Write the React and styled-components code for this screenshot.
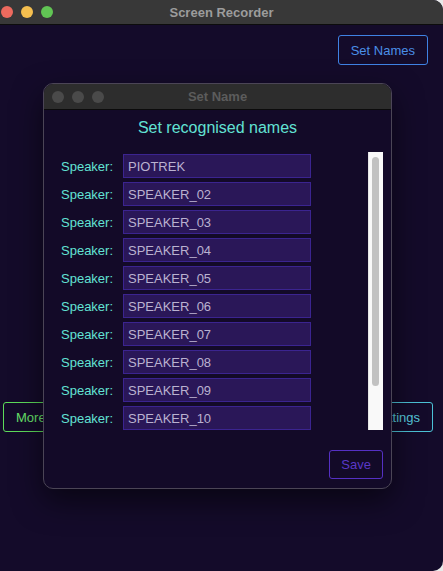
import styled, { createGlobalStyle } from "styled-components";

const speakers = [
  "PIOTREK",
  "SPEAKER_02",
  "SPEAKER_03",
  "SPEAKER_04",
  "SPEAKER_05",
  "SPEAKER_06",
  "SPEAKER_07",
  "SPEAKER_08",
  "SPEAKER_09",
  "SPEAKER_10",
  "SPEAKER_11",
];

const App = () => {
  return (
    <>
      <GlobalStyle />
      <Window>
        <TitleBar>
          <Lights>
            <Light color="#ed6a5e" />
            <Light color="#f5bf4f" />
            <Light color="#61c554" />
          </Lights>
          <TitleText>Screen Recorder</TitleText>
        </TitleBar>

        <Content>
          <TopRow>
            <OutlineButton color="#3f82e4" text="#4b8fe8">Set Names</OutlineButton>
          </TopRow>
          <ActionRow>
            <OutlineButton color="#5ddc5a" text="#68e36a" $wide>More</OutlineButton>
            <OutlineButton color="#4cc2d6" text="#57c9dc">Settings</OutlineButton>
          </ActionRow>
        </Content>

        <Dialog>
          <DialogTitleBar>
            <Lights $small>
              <Light color="#4a4a4a" />
              <Light color="#4a4a4a" />
              <Light color="#4a4a4a" />
            </Lights>
            <DialogTitle>Set Name</DialogTitle>
          </DialogTitleBar>

          <DialogBody>
            <Heading>Set recognised names</Heading>
            <ListArea>
              <SpeakerList>
                {speakers.map((name) => (
                  <SpeakerRow key={name}>
                    <SpeakerLabel>Speaker:</SpeakerLabel>
                    <NameInput defaultValue={name} />
                  </SpeakerRow>
                ))}
              </SpeakerList>
              <ScrollTrack>
                <ScrollThumb />
              </ScrollTrack>
            </ListArea>
            <Footer>
              <OutlineButton color="#5530c4" text="#5a38c6" $narrow>Save</OutlineButton>
            </Footer>
          </DialogBody>
        </Dialog>
      </Window>
    </>
  );
};

const GlobalStyle = createGlobalStyle`
  html, body {
    margin: 0;
    padding: 0;
    background: #e9e9e9;
  }
  body {
    font-family: "Liberation Sans", Arial, sans-serif;
  }
`;

const Window = styled.div`
  position: relative;
  width: 443px;
  height: 571px;
  display: flex;
  flex-direction: column;
  background: #140b2a;
  border-radius: 0 10px 10px 0;
  overflow: hidden;
`;

const TitleBar = styled.div`
  position: relative;
  height: 24px;
  flex-shrink: 0;
  display: flex;
  align-items: center;
  justify-content: center;
  background: #383838;
  border-bottom: 1px solid #0c0c0c;
`;

const Lights = styled.div`
  position: absolute;
  left: ${(p) => (p.$small ? "8px" : "1px")};
  top: 0;
  bottom: 0;
  display: flex;
  align-items: center;
  gap: 8px;
`;

const Light = styled.span`
  width: 12px;
  height: 12px;
  border-radius: 50%;
  background: ${(p) => p.color};
`;

const TitleText = styled.div`
  font-size: 13px;
  font-weight: 700;
  color: #9c9c9c;
`;

const Content = styled.div`
  flex: 1;
  display: flex;
  flex-direction: column;
`;

const TopRow = styled.div`
  display: flex;
  justify-content: flex-end;
  padding: 10px 15px 0 0;
`;

const ActionRow = styled.div`
  display: flex;
  justify-content: space-between;
  margin-top: 337px;
  padding: 0 10px 0 3px;
`;

const OutlineButton = styled.button`
  height: ${(p) => (p.$narrow ? "29px" : "30px")};
  min-width: ${(p) => (p.$wide ? "90px" : "0")};
  padding: 0 ${(p) => (p.$narrow ? "11px" : "12px")};
  text-align: left;
  background: transparent;
  border: 1px solid ${(p) => p.color};
  border-radius: 3px;
  color: ${(p) => p.text};
  font-family: "Liberation Sans", Arial, sans-serif;
  font-size: 13px;
  cursor: pointer;
`;

const Dialog = styled.div`
  position: absolute;
  left: 43px;
  top: 83px;
  width: 349px;
  height: 406px;
  box-sizing: border-box;
  display: flex;
  flex-direction: column;
  background: #130a28;
  border: 1px solid #4b4556;
  border-radius: 10px;
  overflow: hidden;
  box-shadow: 0 12px 30px rgba(0, 0, 0, 0.55);
`;

const DialogTitleBar = styled.div`
  position: relative;
  height: 25px;
  flex-shrink: 0;
  display: flex;
  align-items: center;
  justify-content: center;
  background: #2d2d2d;
  border-bottom: 1px solid #0b0b0b;
`;

const DialogTitle = styled.div`
  font-size: 13px;
  font-weight: 700;
  color: #5c5c5c;
`;

const DialogBody = styled.div`
  flex: 1;
  display: flex;
  flex-direction: column;
  padding: 9px 8px 9px 8px;
`;

const Heading = styled.div`
  text-align: center;
  font-size: 16px;
  line-height: 18px;
  color: #62e2d4;
`;

const ListArea = styled.div`
  margin-top: 15px;
  height: 278px;
  display: flex;
`;

const SpeakerList = styled.div`
  flex: 1;
  overflow: hidden;
  padding: 2px 0 0 9px;
  display: flex;
  flex-direction: column;
  gap: 4px;
`;

const ScrollTrack = styled.div`
  width: 15px;
  flex-shrink: 0;
  box-sizing: border-box;
  padding: 5px 4px;
  background: #f9f9f9;
  box-shadow: inset 1px 0 0 #e6e6e6;
`;

const ScrollThumb = styled.div`
  height: 229px;
  border-radius: 4px;
  background: #c2c2c2;
`;

const SpeakerRow = styled.div`
  display: flex;
  align-items: center;
  flex-shrink: 0;
  height: 24px;
`;

const SpeakerLabel = styled.span`
  width: 62px;
  font-size: 13px;
  color: #62e2d4;
`;

const NameInput = styled.input`
  width: 188px;
  height: 24px;
  box-sizing: border-box;
  padding: 0 4px;
  background: #2a1758;
  border: 1px solid #3b2490;
  color: #bab2d0;
  font-family: "Liberation Sans", Arial, sans-serif;
  font-size: 13px;
  outline: none;
`;

const Footer = styled.div`
  margin-top: auto;
  display: flex;
  justify-content: flex-end;
`;

export default App;
